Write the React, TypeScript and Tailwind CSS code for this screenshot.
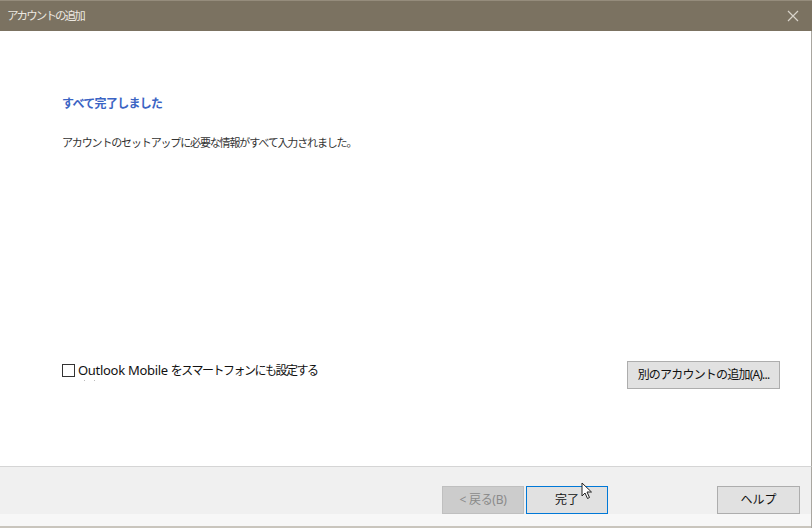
import React from "react";

const font = "font-['Noto_Sans','Noto_Sans_CJK_JP',sans-serif]";

// ---------------------------------------------------------
// タイトルバー
// ---------------------------------------------------------
function TitleBar() {
  return (
    <div className="h-[31px] border-t border-[#958c7c] bg-[#7b7261] flex items-center justify-between pl-[7px] pr-[12px]">
      <span className="text-[11.5px] tracking-[-1.9px] text-[#ece8e0] leading-none">アカウントの追加</span>
      <svg width="12" height="12" viewBox="0 0 12 12" className="mr-[1px]">
        <path d="M1 1 L11 11 M11 1 L1 11" stroke="#d8d3ca" strokeWidth="1.2" />
      </svg>
    </div>
  );
}

function Button({
  label,
  disabled,
  primary,
  className,
}: {
  label: string;
  disabled?: boolean;
  primary?: boolean;
  className?: string;
}) {
  const tone = disabled
    ? "bg-[#cccccc] border-[#bfbfbf] text-[#8a8a8a]"
    : primary
    ? "bg-[#e1e1e1] border-[#0078d7] text-[#111]"
    : "bg-[#e1e1e1] border-[#adadad] text-[#111]";
  return (
    <button className={`h-[28px] border text-[12px] flex items-center justify-center ${tone} ${className ?? ""}`}>
      {label}
    </button>
  );
}

export default function App() {
  return (
    <div className={`w-[812px] h-[528px] flex flex-col bg-white ${font}`}>
      <TitleBar />

      {/* 本文 */}
      <div className="flex-1 flex flex-col border-r border-[#a9a6a0] pl-[62px] pr-[31px]">
        <div className="mt-[64px] text-[12px] tracking-[-0.7px] font-bold text-[#3b64c4] leading-[18px]">
          すべて完了しました
        </div>
        <div className="mt-[21px] text-[11px] tracking-[-1.15px] text-[#333] leading-[18px]">
          アカウントのセットアップに必要な情報がすべて入力されました。
        </div>

        <div className="mt-[210px] flex items-start justify-between">
          <div className="flex flex-col">
            <label className="flex items-center gap-[3px]">
              <span className="w-[13px] h-[13px] border border-[#333] bg-white" />
              <span className="text-[#111] leading-[14px]">
                <span className="text-[13px] tracking-[-0.3px]">Outlook Mobile </span>
                <span className="text-[12px] tracking-[-1.5px]">をスマートフォンにも設定する</span>
              </span>
            </label>
            <div className="ml-[22px] mt-[2px] flex gap-[9px]">
              <span className="w-[1px] h-[1px] bg-[#bbb]" />
              <span className="w-[1px] h-[1px] bg-[#bbb]" />
            </div>
          </div>
          <Button label="別のアカウントの追加(A)..." className="w-[153px] h-[27px] -mt-[1px] text-[11.5px] tracking-[-0.8px]" />
        </div>
      </div>

      {/* フッター */}
      <div className="h-[62px] border-t border-r border-[#d5d5d5] border-r-[#a9a6a0] bg-[#f0f0f0] flex flex-col">
        <div className="h-[47px] flex items-end">
          <div className="ml-[442px] flex gap-[2px]">
            <Button label="< 戻る(B)" disabled className="w-[82px] tracking-[-0.3px]" />
            <div className="relative">
              <Button label="完了" primary className="w-[82px]" />
              <svg
                width="12"
                height="18"
                viewBox="0 0 12 18"
                className="absolute left-[55px] -top-[4px]"
              >
                <path d="M1 1 L1 14 L4 11 L6.5 16.5 L8.5 15.5 L6 10 L10.5 10 Z" fill="#fff" stroke="#222" strokeWidth="1" />
              </svg>
            </div>
          </div>
          <Button label="ヘルプ" className="ml-[109px] w-[83px]" />
        </div>
        <div className="flex-1 bg-[#f7f7f7] border-b-2 border-[#c9c5bd]" />
      </div>
    </div>
  );
}
